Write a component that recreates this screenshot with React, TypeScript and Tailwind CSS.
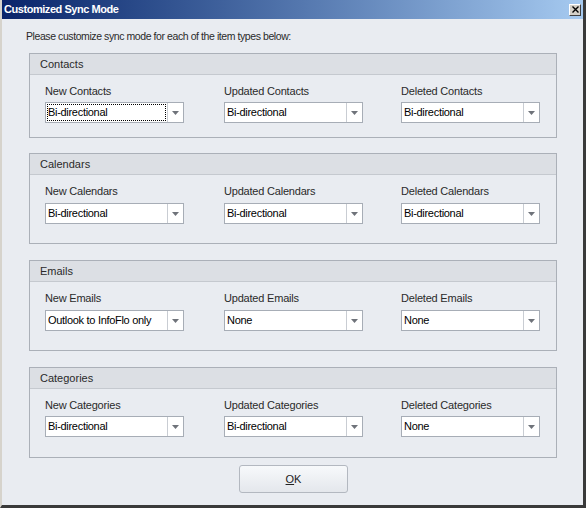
import React from "react";

type Field = { label: string; value: string; focused?: boolean };
type Group = { title: string; fields: Field[]; mt: string; gap: string; pb: string };

const groups: Group[] = [
  {
    title: "Contacts",
    mt: "mt-[10px]",
    gap: "mt-[4px]",
    pb: "pb-[14px]",
    fields: [
      { label: "New Contacts", value: "Bi-directional", focused: true },
      { label: "Updated Contacts", value: "Bi-directional" },
      { label: "Deleted Contacts", value: "Bi-directional" },
    ],
  },
  {
    title: "Calendars",
    mt: "mt-[15px]",
    gap: "mt-[5px]",
    pb: "pb-[19px]",
    fields: [
      { label: "New Calendars", value: "Bi-directional" },
      { label: "Updated Calendars", value: "Bi-directional" },
      { label: "Deleted Calendars", value: "Bi-directional" },
    ],
  },
  {
    title: "Emails",
    mt: "mt-[16px]",
    gap: "mt-[5px]",
    pb: "pb-[19px]",
    fields: [
      { label: "New Emails", value: "Outlook to InfoFlo only" },
      { label: "Updated Emails", value: "None" },
      { label: "Deleted Emails", value: "None" },
    ],
  },
  {
    title: "Categories",
    mt: "mt-[16px]",
    gap: "mt-[4px]",
    pb: "pb-[20px]",
    fields: [
      { label: "New Categories", value: "Bi-directional" },
      { label: "Updated Categories", value: "Bi-directional" },
      { label: "Deleted Categories", value: "None" },
    ],
  },
];

const colWidths = ["w-[179px]", "w-[177px]", "w-[139px]"];

function Combo({ value, focused }: { value: string; focused?: boolean }) {
  return (
    <div className="flex h-[21px] w-[139px] border border-[#a7adb6] bg-white">
      <div className="flex flex-1 items-center p-[1px]">
        <div
          className={
            focused
              ? "flex h-full w-full items-center border border-dotted border-black tracking-[-0.3px] text-black"
              : "flex h-full w-full items-center pl-[1px] tracking-[-0.3px] text-black"
          }
        >
          {value}
        </div>
      </div>
      <div className="flex w-[16px] items-center justify-center border-l border-[#c9cdd3] bg-white">
        <svg width="7" height="4" viewBox="0 0 7 4">
          <path d="M0 0h7L3.5 4z" fill="#6f737a" />
        </svg>
      </div>
    </div>
  );
}

function GroupBox({ group }: { group: Group }) {
  return (
    <div className={`${group.mt} w-[528px] border border-[#abb0b8] bg-[#e9ecf1]`}>
      <div className="flex h-[21px] items-center border-b border-[#c5c9cf] bg-[#dcdfe4] pl-[10px] text-[#2a2a2a]">
        {group.title}
      </div>
      <div className={`flex pl-[15px] pt-[10px] ${group.pb}`}>
        {group.fields.map((f, i) => (
          <div key={f.label} className={`${colWidths[i]} flex flex-col`}>
            <div className="h-[13px] leading-[13px] tracking-[-0.2px] text-[#2a2a2a]">{f.label}</div>
            <div className={group.gap}>
              <Combo value={f.value} focused={f.focused} />
            </div>
          </div>
        ))}
      </div>
    </div>
  );
}

export default function App() {
  return (
    <div
      className="flex h-[508px] w-[586px] flex-col border-b-[3px] border-l-2 border-r-[3px] border-b-[#3a3a3a] border-l-[#d6d3cc] border-r-[#3a3a3a] text-[11px]"
      style={{ fontFamily: '"Liberation Sans", Arial, sans-serif' }}
    >
      {/* title bar */}
      <div className="flex h-[19px] shrink-0 items-center justify-between bg-linear-to-r from-[#0a246a] to-[#a6caf0] pl-[2px] pr-[2px]">
        <span className="text-[11px] font-bold tracking-[-0.45px] text-white">Customized Sync Mode</span>
        <div className="flex h-[12px] w-[12px] items-center justify-center border border-t-white border-l-white border-r-[#404040] border-b-[#404040] bg-[#d4d0c8]">
          <svg width="7" height="7" viewBox="0 0 7 7">
            <path d="M0.5 0.5l6 6M6.5 0.5l-6 6" stroke="#000" strokeWidth="1.4" />
          </svg>
        </div>
      </div>

      {/* body */}
      <div className="flex flex-1 flex-col bg-[#e9ecf1] pl-[27px]">
        <div className="-ml-[3px] mt-[11px] h-[13px] text-[10.5px] leading-[13px] tracking-[-0.42px] text-[#2a2a2a]">
          Please customize sync mode for each of the item types below:
        </div>
        {groups.map((g) => (
          <GroupBox key={g.title} group={g} />
        ))}
        <div className="mt-[7px] flex w-[528px] justify-center">
          <button className="ml-[1px] flex h-[28px] w-[109px] items-center justify-center rounded-[3px] border border-[#b3b8c0] bg-linear-to-b from-[#f7f9fb] to-[#e4e7ec] text-[#222]">
            <span>
              <span className="underline">O</span>K
            </span>
          </button>
        </div>
      </div>
    </div>
  );
}
